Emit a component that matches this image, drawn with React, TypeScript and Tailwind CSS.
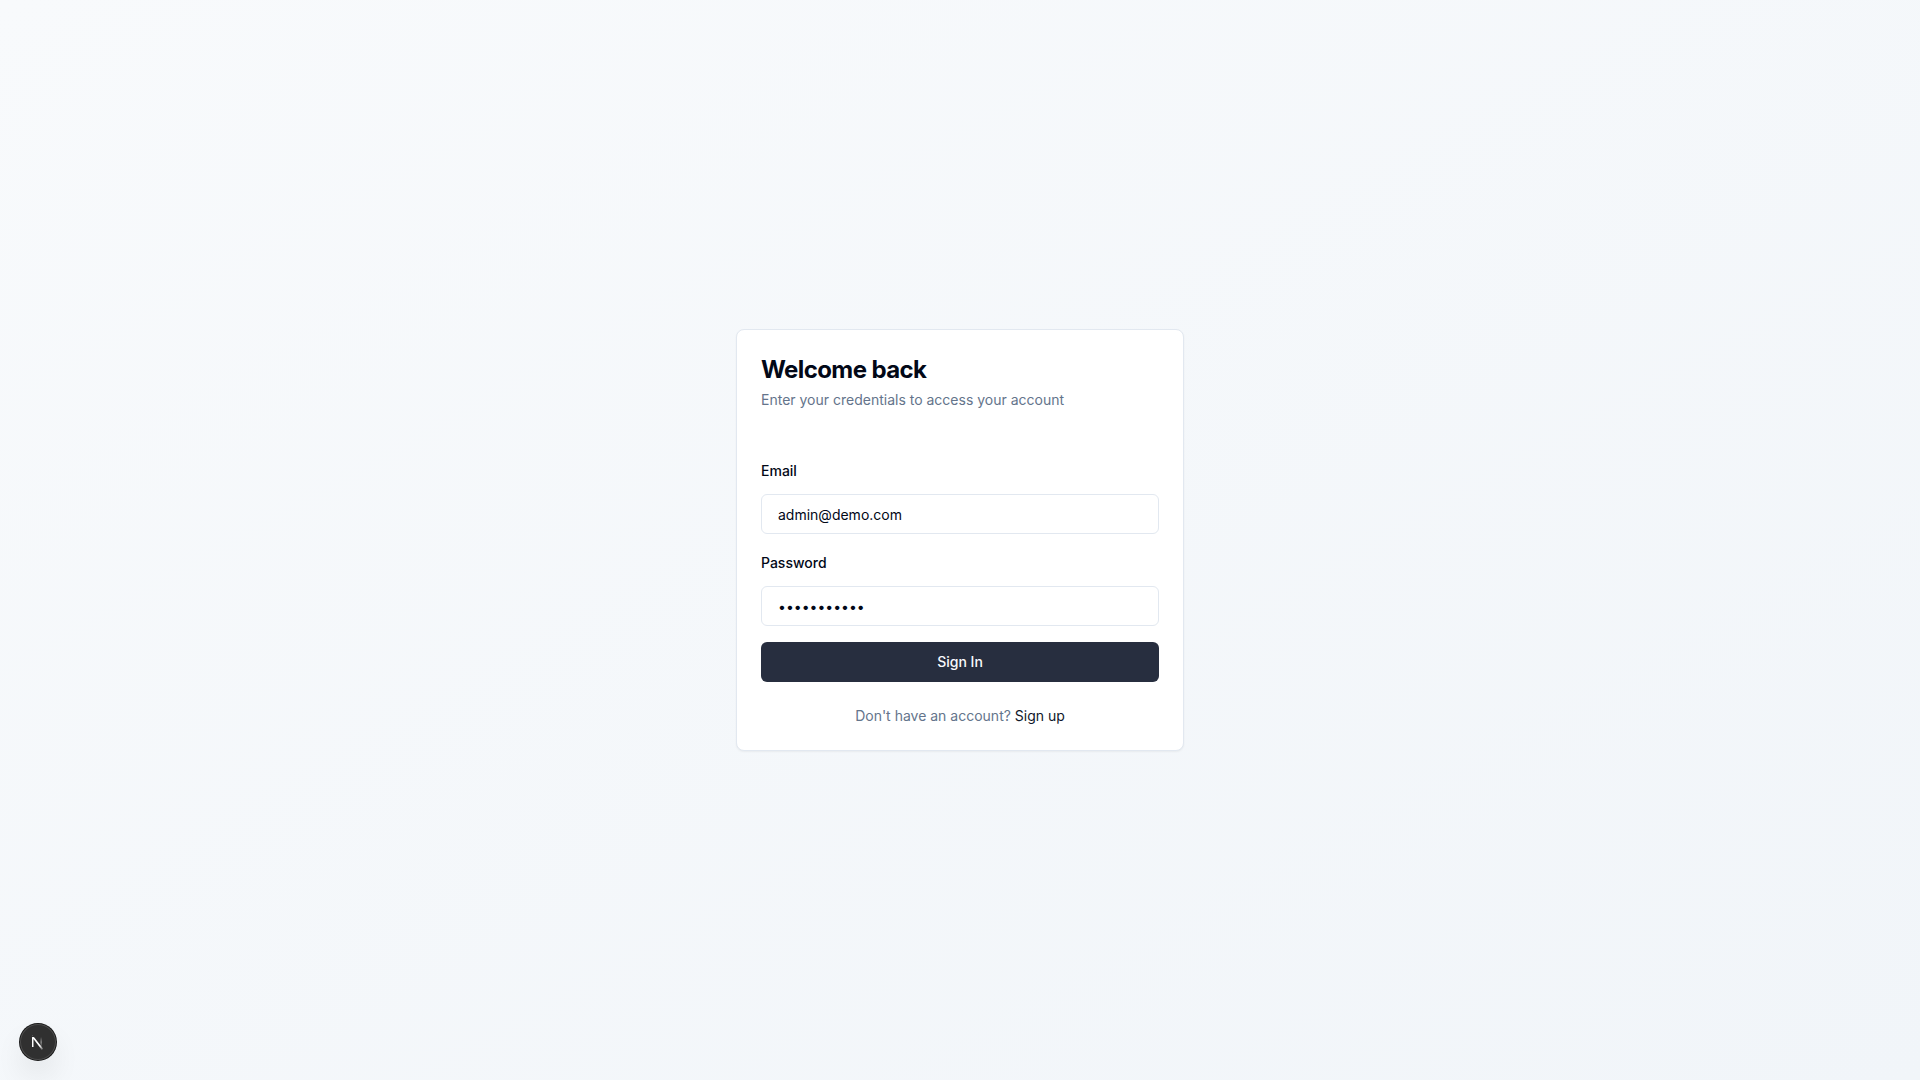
function NextMark() {
  return (
    <svg viewBox="0 0 40 40" fill="none" className="size-9" aria-hidden="true">
      <g transform="translate(11.7 13)">
        <path d="M13.3 15.2 L2.34 1 V12.6" stroke="url(#diagonal)" strokeWidth="1.86" mask="url(#clip)" />
        <path d="M11.825 1.5 V13.1" stroke="url(#stem)" strokeWidth="1.86" />
      </g>
      <defs>
        <linearGradient id="diagonal" x1="9.95555" y1="11.1226" x2="15.4778" y2="17.9671" gradientUnits="userSpaceOnUse">
          <stop stopColor="white" />
          <stop offset="0.804072" stopColor="white" stopOpacity="0" />
          <stop offset="1" stopColor="white" stopOpacity="0" />
        </linearGradient>
        <linearGradient id="stem" x1="11.8222" y1="1.40039" x2="11.791" y2="13" gradientUnits="userSpaceOnUse">
          <stop stopColor="white" stopOpacity="0" />
          <stop offset="0.5" stopColor="white" stopOpacity="0.4" />
          <stop offset="1" stopColor="white" stopOpacity="0" />
        </linearGradient>
        <mask id="clip">
          <rect width="100%" height="100%" fill="white" />
          <rect width="5" height="1.5" fill="black" />
        </mask>
      </defs>
    </svg>
  );
}

export default function App() {
  return (
    <main className="flex min-h-screen items-center justify-center bg-linear-to-br/srgb from-[#f8fafc] to-[#f1f5f9] p-4 font-['Inter',sans-serif] text-[#020817] antialiased">
      <section className="w-full max-w-md rounded-lg border border-[#e2e8f0] bg-white shadow-xs">
        <header className="flex flex-col gap-1 p-6">
          <h1 className="text-2xl font-bold tracking-tight">Welcome back</h1>
          <p className="text-sm text-[#64748b]">Enter your credentials to access your account</p>
        </header>
        <form className="flex flex-col gap-4 px-6 pt-6" onSubmit={(e) => e.preventDefault()}>
          <div className="flex flex-col gap-3">
            <div>
              <label htmlFor="email" className="text-sm font-medium">Email</label>
            </div>
            <input id="email" type="email" defaultValue="admin@demo.com" className="h-10 w-full rounded-md border border-[#e2e8f0] bg-white px-4 text-sm" />
          </div>
          <div className="flex flex-col gap-3">
            <div>
              <label htmlFor="password" className="text-sm font-medium">Password</label>
            </div>
            <input id="password" type="password" defaultValue="password123" className="h-10 w-full rounded-md border border-[#e2e8f0] bg-white px-4 text-sm" />
          </div>
          <button type="submit" className="h-10 rounded-md bg-[#272e3f] text-sm font-medium text-slate-50">Sign In</button>
        </form>
        <p className="p-6 text-center text-sm text-[#64748b]">
          Don't have an account? <a href="#signup" className="text-[#0f172a]">Sign up</a>
        </p>
      </section>
      <button
        type="button"
        aria-label="Open Next.js Dev Tools"
        className="fixed bottom-5 left-5 flex size-9 items-center justify-center rounded-full bg-[#303030] shadow-[0_0_0_1px_#171717,inset_0_0_0_1px_rgba(255,255,255,0.14),0_16px_32px_-8px_rgba(0,0,0,0.24)]"
      >
        <NextMark />
      </button>
    </main>
  );
}
